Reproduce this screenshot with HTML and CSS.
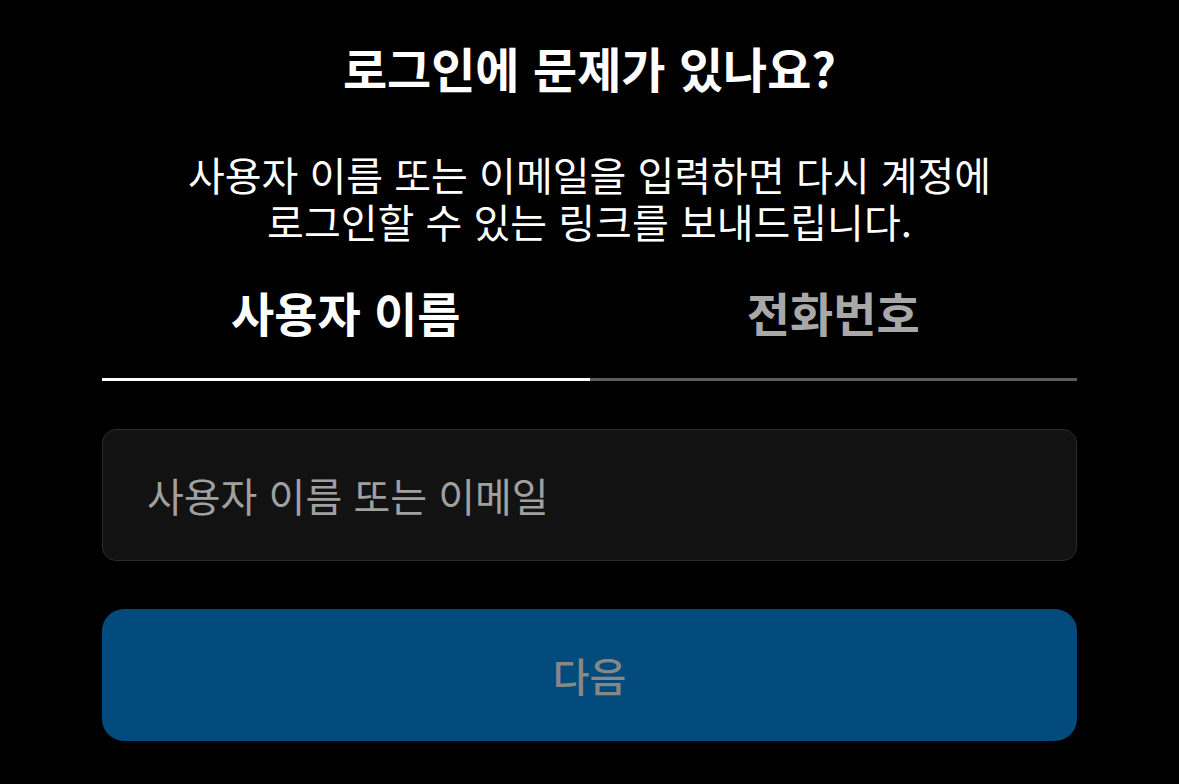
FILE: index.html
```html
<!DOCTYPE html>
<html lang="ko">
<head>
<meta charset="utf-8">
<title>로그인에 문제가 있나요?</title>
<link rel="stylesheet" href="styles.css">
</head>
<body>
<main class="page">
  <h1 class="title">로그인에 문제가 있나요?</h1>
  <p class="desc">사용자 이름 또는 이메일을 입력하면 다시 계정에<br>로그인할 수 있는 링크를 보내드립니다.</p>
  <div class="tabs">
    <div class="tab active">사용자 이름</div>
    <div class="tab">전화번호</div>
  </div>
  <div class="field">
    <input class="input" type="text" placeholder="사용자 이름 또는 이메일">
  </div>
  <button class="next" type="button">다음</button>
</main>
</body>
</html>
```

FILE: styles.css
```css
html, body {
  margin: 0;
  padding: 0;
  background: #000;
}
body {
  font-family: "Noto Sans CJK KR", "Noto Sans", sans-serif;
  color: #fff;
}
.page {
  width: 975px;
  margin: 0 auto;
  display: flex;
  flex-direction: column;
  align-items: stretch;
}
.title {
  margin: 39px 0 0;
  font-size: 48px;
  line-height: 56px;
  font-weight: 700;
  text-align: center;
}
.desc {
  margin: 56px 0 0;
  font-size: 40px;
  line-height: 47px;
  font-weight: 400;
  text-align: center;
}
.tabs {
  margin-top: 39px;
  display: grid;
  grid-template-columns: 1fr 1fr;
}
.tab {
  font-size: 47px;
  line-height: 56px;
  font-weight: 700;
  text-align: center;
  color: #a8a8a8;
  padding-bottom: 38px;
  border-bottom: 3px solid #5c5c5c;
}
.tab.active {
  color: #fff;
  border-bottom-color: #fff;
}
.field {
  margin-top: 48px;
}
.input {
  box-sizing: border-box;
  width: 100%;
  height: 132px;
  background: #121212;
  border: 1px solid #2c2c2c;
  border-radius: 14px;
  padding: 0 44px;
  font-family: "Noto Sans CJK KR", "Noto Sans", sans-serif;
  font-size: 40px;
  color: #fff;
  outline: none;
}
.input::placeholder {
  color: #a0a0a0;
}
.next {
  margin-top: 48px;
  height: 132px;
  border: none;
  border-radius: 22px;
  background: #024b7c;
  color: #878787;
  font-family: "Noto Sans CJK KR", "Noto Sans", sans-serif;
  font-size: 40px;
  font-weight: 500;
  cursor: pointer;
}
```
